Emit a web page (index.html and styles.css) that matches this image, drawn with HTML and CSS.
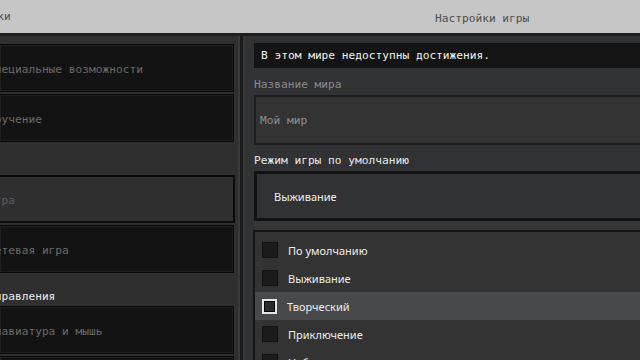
FILE: index.html
```html
<!DOCTYPE html>
<html lang="ru">
<head>
    <meta charset="UTF-8">
    <meta name="viewport" content="width=device-width, initial-scale=1.0">
    <title>Настройки игры</title>
    <link rel="stylesheet" href="styles.css">
</head>
<body>
    <header class="topbar">
        <div class="topbar-left"><span class="cut-text">Настройки</span></div>
        <div class="topbar-right">Настройки игры</div>
    </header>

    <main class="screen">
        <nav class="sidebar">
            <div class="side-btn"><span class="cut-text">Специальные возможности</span></div>
            <div class="side-btn"><span class="cut-text">Обучение</span></div>
            <div class="side-head"></div>
            <div class="side-btn selected"><span class="cut-text">Игра</span></div>
            <div class="side-btn"><span class="cut-text">Сетевая игра</span></div>
            <div class="side-head"><span class="cut-text">Управления</span></div>
            <div class="side-btn"><span class="cut-text">Клавиатура и мышь</span></div>
            <div class="side-btn"><span class="cut-text">Сенсорный экран</span></div>
        </nav>

        <div class="divider"></div>

        <section class="settings">
            <div class="notice">В этом мире недоступны достижения.</div>

            <div class="field-label">Название мира</div>
            <div class="text-field">Мой мир</div>

            <div class="field-label bright">Режим игры по умолчанию</div>
            <div class="dropdown">Выживание</div>

            <div class="dropdown-gap"></div>

            <ul class="option-list">
                <li class="option"><span class="check"></span>По умолчанию</li>
                <li class="option"><span class="check"></span>Выживание</li>
                <li class="option active"><span class="check"></span>Творческий</li>
                <li class="option"><span class="check"></span>Приключение</li>
                <li class="option"><span class="check"></span>Наблюдатель</li>
            </ul>
        </section>
    </main>
</body>
</html>
```

FILE: styles.css
```css
body {
    margin: 0;
    width: 640px;
    height: 360px;
    overflow: hidden;
    background: #313233;
    font-family: "DejaVu Sans Mono", monospace;
    font-size: 11.2px;
    line-height: 13px;
}

.topbar {
    height: 33px;
    display: flex;
    align-items: center;
    background: #c6c6c6;
    color: #4e4e4e;
    border-bottom: 3px solid #1e1e1e;
}
.topbar-left {
    width: 246px;
    overflow: hidden;
    white-space: nowrap;
}
.topbar-left .cut-text {
    margin-left: -50px;
}
.topbar-right {
    padding-left: 189px;
    padding-top: 3px;
}

.screen {
    display: flex;
    height: 324px;
}

.sidebar {
    width: 238px;
    padding-top: 8px;
    background: #2f2f2f;
    border-right: 2px solid #3a3a3a;
    overflow: hidden;
    white-space: nowrap;
}
.cut-text {
    display: inline-block;
    margin-left: -12px;
}
.side-btn {
    height: 44px;
    width: 233px;
    margin-bottom: 2px;
    display: flex;
    align-items: center;
    background: #131313;
    border: 1px solid #0a0a0a;
    border-left: none;
    box-shadow: inset 0 0 0 1px #1f1f1f;
    color: #6a6a6a;
    padding-top: 2px;
}
.side-btn.selected {
    background: #2f2f2f;
    border: 2px solid #0b0b0b;
    border-left: none;
    box-shadow: none;
    height: 42px;
    color: #5c5c5c;
}
.side-head {
    height: 29px;
    margin-bottom: 2px;
    display: flex;
    align-items: flex-end;
    box-sizing: border-box;
    padding-bottom: 1px;
    color: #ececec;
}

.divider {
    width: 3px;
    background: #1a1a1a;
    border-right: 2px solid #3a3a3a;
}

.settings {
    flex: 1;
    padding-top: 7px;
    padding-left: 9px;
    overflow: hidden;
    white-space: nowrap;
}

.notice {
    height: 25px;
    display: flex;
    align-items: center;
    padding-left: 7px;
    background: #141414;
    color: #f2f2f2;
}

.field-label {
    height: 27px;
    display: flex;
    align-items: flex-end;
    padding-bottom: 4px;
    box-sizing: border-box;
    color: #8a8a8a;
}
.field-label.bright {
    height: 26px;
    padding-bottom: 4px;
    color: #e8e8e8;
}

.text-field {
    height: 46px;
    display: flex;
    align-items: center;
    padding-left: 4px;
    background: #333334;
    border: 2px solid #1e1e1e;
    border-right: none;
    color: #8e8e8e;
}

.dropdown {
    height: 44px;
    display: flex;
    align-items: center;
    padding-left: 17px;
    background: #313233;
    border: 3px solid #121212;
    border-right: none;
    color: #f0f0f0;
    font-family: "Noto Sans", sans-serif;
    font-size: 11px;
}

.dropdown-gap {
    height: 9px;
    background: #363637;
}

.option-list {
    list-style: none;
    margin: 0 0 0 -1px;
    padding: 4px 0 0 0;
    background: #333334;
    border-top: 2px solid #141414;
    border-left: 2px solid #161616;
}
.option {
    height: 28px;
    display: flex;
    align-items: center;
    gap: 10px;
    padding-left: 7px;
    color: #ececec;
    font-family: "Noto Sans", sans-serif;
    font-size: 11px;
}
.option.active {
    background: #48494a;
}
.check {
    width: 14px;
    height: 14px;
    background: #1b1b1b;
    border: 1px solid #121212;
}
.option.active .check {
    width: 11px;
    height: 11px;
    border: 2px solid #e6e6e6;
    background: #2a2a2a;
    box-shadow: inset 0 0 0 1px #000;
}
```
